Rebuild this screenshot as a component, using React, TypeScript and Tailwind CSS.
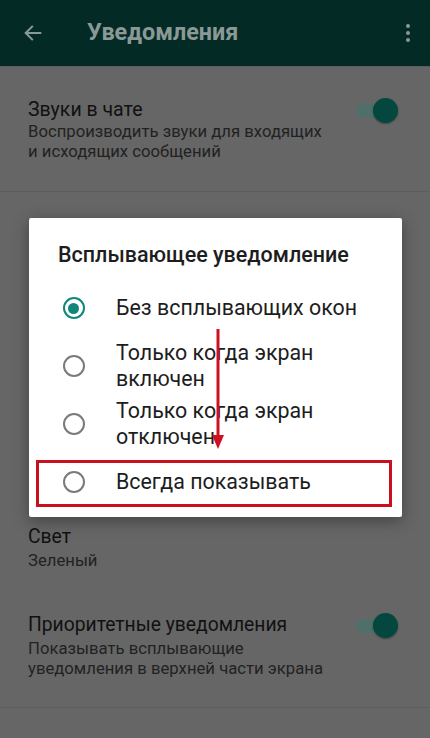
import React from "react";

const font = { fontFamily: "Roboto, 'Noto Sans', sans-serif" };

function Toggle() {
  return (
    <div className="relative w-[44px] h-[26px] shrink-0 flex items-center">
      <div className="w-[38px] h-[14px] rounded-full bg-[#4f6f6a] ml-[2px]" />
      <div className="absolute right-0 top-0 w-[25px] h-[25px] rounded-full bg-[#04473f] shadow-[0_1px_2px_rgba(0,0,0,0.35)]" />
    </div>
  );
}

function Radio({ checked }: { checked?: boolean }) {
  if (checked) {
    return (
      <div className="w-[22px] h-[22px] rounded-full border-[2.5px] border-[#10877a] flex items-center justify-center shrink-0">
        <div className="w-[11px] h-[11px] rounded-full bg-[#10877a]" />
      </div>
    );
  }
  return <div className="w-[22px] h-[22px] rounded-full border-[2px] border-[#7a7a7a] shrink-0" />;
}

const options = [
  { label: ["Без всплывающих окон"], checked: true },
  { label: ["Только когда экран", "включен"] },
  { label: ["Только когда экран", "отключен"] },
  { label: ["Всегда показывать"] },
];

export default function App() {
  return (
    <div className="relative w-[430px] h-[738px] overflow-hidden bg-[#666666]" style={font}>
      {/* top bar */}
      <div className="h-[66px] bg-[#032a25] flex items-center px-[22px]">
        <svg width="22" height="22" viewBox="0 0 24 24" className="shrink-0">
          <path d="M20 12H5M11 5l-7 7 7 7" stroke="#8a9996" strokeWidth="2.2" fill="none" strokeLinecap="square" />
        </svg>
        <div className="ml-[43px] text-[23.4px] font-bold text-[#8a9996]">Уведомления</div>
        <div className="ml-auto mr-[-2px] flex flex-col gap-[3px] items-center">
          <span className="w-[4px] h-[4px] rounded-full bg-[#8a9996]" />
          <span className="w-[4px] h-[4px] rounded-full bg-[#8a9996]" />
          <span className="w-[4px] h-[4px] rounded-full bg-[#8a9996]" />
        </div>
      </div>
      <div className="h-[1px] bg-[#5c5c5c]" />

      {/* settings list */}
      <div className="flex items-start justify-between pl-[28px] pr-[32px] pt-[31px] pb-[29px] border-b border-[#5d5d5d]">
        <div>
          <div className="text-[19.5px] leading-[24px] text-[#111111]">Звуки в чате</div>
          <div className="text-[16.7px] leading-[20px] text-[#222222]">
            Воспроизводить звуки для входящих
            <br />и исходящих сообщений
          </div>
        </div>
        <Toggle />
      </div>

      {/* items covered by the dialog */}
      <div className="h-[333px] pl-[28px] pt-[22px]">
        <div className="text-[15px] text-[#1a1a1a]">Уведомления</div>
      </div>

      <div className="pl-[28px]">
        <div className="text-[19.3px] leading-[24px] text-[#111111]">Свет</div>
        <div className="text-[16.7px] leading-[20px] text-[#222222] mt-[2px]">Зеленый</div>
      </div>

      <div className="flex items-start justify-between pl-[28px] pr-[32px] pt-[42px] pb-[28px] border-b border-[#5d5d5d]">
        <div>
          <div className="text-[19.3px] leading-[24px] text-[#111111]">Приоритетные уведомления</div>
          <div className="text-[16.7px] leading-[20px] text-[#222222] mt-[2px]">
            Показывать всплывающие
            <br />
            уведомления в верхней части экрана
          </div>
        </div>
        <Toggle />
      </div>

      {/* dialog */}
      <div className="absolute left-[29px] top-[218px] w-[373px] h-[299px] bg-white rounded-[2px] shadow-[0_4px_16px_rgba(0,0,0,0.35)]">
        <div className="pl-[29px] pt-[24px] text-[21.5px] leading-[26px] font-medium text-[#1d1d1d]">
          Всплывающее уведомление
        </div>
        <div className="mt-[11px]">
          {options.map((o, i) => (
            <div key={i} className="flex items-center h-[58px]">
              <div className="w-[87px] flex justify-center pl-[2px]">
                <Radio checked={o.checked} />
              </div>
              <div className="text-[21.4px] leading-[26px] text-[#1d1d1d]">
                {o.label.map((l, j) => (
                  <div key={j}>{l}</div>
                ))}
              </div>
            </div>
          ))}
        </div>

        {/* annotation: arrow + highlight box */}
        <svg className="absolute left-[182px] top-[111px]" width="14" height="122" viewBox="0 0 14 122">
          <line x1="7" y1="0" x2="7" y2="108" stroke="#d0101e" strokeWidth="3" />
          <path d="M1 106 L13 106 L7 120 Z" fill="#d0101e" />
        </svg>
        <div className="absolute left-[7px] top-[242px] w-[356px] h-[47px] border-[3px] border-[#c8101f]" />
      </div>
    </div>
  );
}
